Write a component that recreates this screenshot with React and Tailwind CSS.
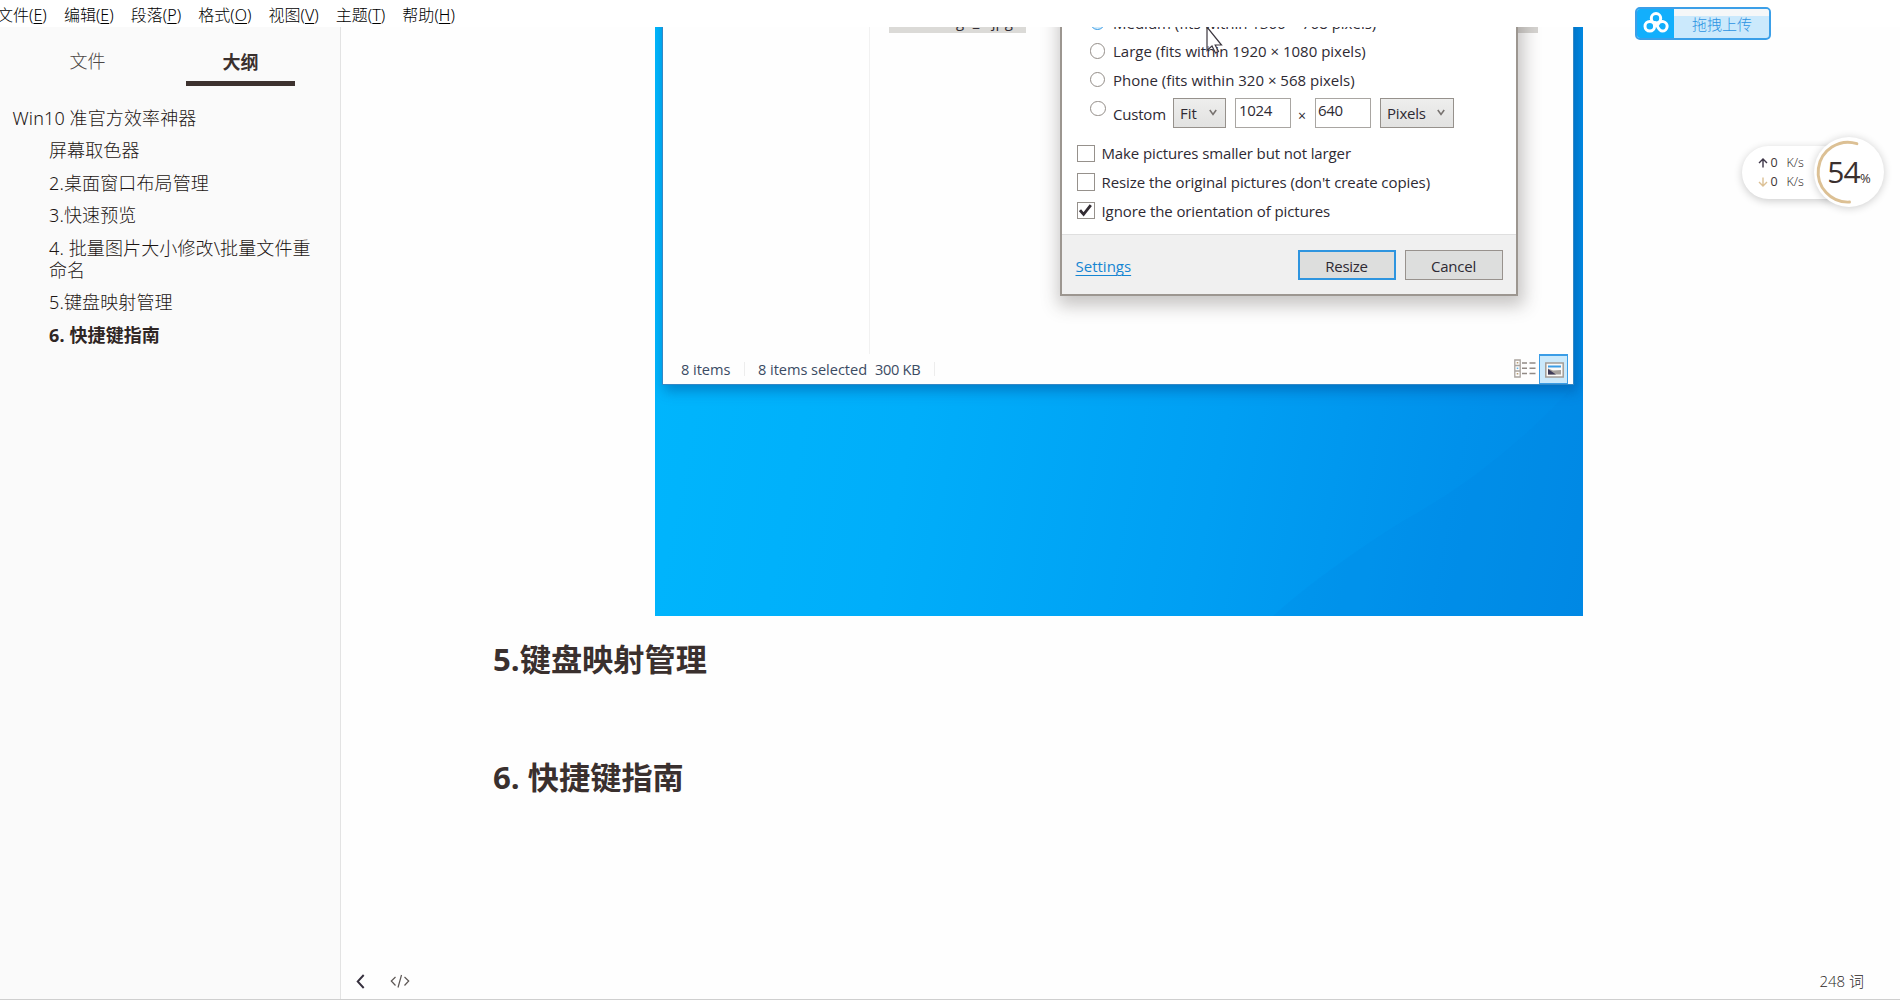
const MENU = [
  ["文件", "E"],
  ["编辑", "E"],
  ["段落", "P"],
  ["格式", "O"],
  ["视图", "V"],
  ["主题", "T"],
  ["帮助", "H"],
];

const OUTLINE = [
  "屏幕取色器",
  "2.桌面窗口布局管理",
  "3.快速预览",
  "4. 批量图片大小修改\\批量文件重命名",
  "5.键盘映射管理",
];

function MenuBar() {
  return (
    <header className='relative flex h-[27px] shrink-0 items-center gap-[17.1px] bg-white pt-[3px] font-["Noto_Sans","Noto_Sans_CJK_SC",sans-serif] text-[16px] leading-[22px] font-light text-black'>
      {MENU.map(([label, key], i) => (
        <span key={label} className={i === 0 ? "-ml-[3px] whitespace-nowrap" : "whitespace-nowrap"}>
          {label}(<span className="underline decoration-1 underline-offset-[2px]">{key}</span>)
        </span>
      ))}
    </header>
  );
}

function Sidebar() {
  return (
    <aside className='flex w-[341px] shrink-0 flex-col border-r border-[#e3e3e3] bg-[#fafafa] font-["Noto_Sans","Noto_Sans_CJK_SC",sans-serif] text-[18px] text-[#1c1513]'>
      <div className="flex h-[59px] gap-[31px] pl-[33px]">
        <div className="flex w-[109px] items-center justify-center pb-[1px] pt-[10px] font-light text-[#4c4746]">
          文件
        </div>
        <div className="-ml-px flex w-[109px] translate-x-[14px] flex-col items-center justify-end border-b-[5px] border-[#3d322f] pb-[7px] font-bold text-[#3a302e]">
          <span className="leading-[24px]">大纲</span>
        </div>
      </div>
      <nav className="flex flex-col gap-[10.5px] pt-[20.5px] font-light leading-[22px] tracking-[0.12px]">
        <div className="pl-[12.5px]">Win10 准官方效率神器</div>
        {OUTLINE.map((t) => (
          <div key={t} className="w-[318px] pl-[49px]">
            {t}
          </div>
        ))}
        <div className="pl-[49px] font-bold text-[#2f2624]">6. 快捷键指南</div>
      </nav>
    </aside>
  );
}

function Radio({ label, selected }) {
  return (
    <label className="flex h-[28.67px] items-center gap-[8px] pl-[27.5px]">
      <span
        className={
          selected
            ? "h-[15.5px] w-[15.5px] rounded-full border-[1.5px] border-[#3b9de6] bg-[#d4ecfb]"
            : "h-[15.5px] w-[15.5px] rounded-full border-[1.2px] border-[#938d88] bg-white"
        }
      />
      <span className="pt-[1px]">{label}</span>
    </label>
  );
}

function Check({ label, checked, tracking }) {
  return (
    <label className="flex h-[28.67px] items-center gap-[6.5px] pl-[14.5px]">
      <span className="flex h-[17.5px] w-[18.5px] items-center justify-center border-[1.5px] border-[#96918c] bg-white">
        {checked && (
          <svg width="13" height="13" viewBox="0 0 13 13" fill="none">
            <path d="M1 6.2 4.6 10.4 11.8 1.2" stroke="#332c33" strokeWidth="2.8" />
          </svg>
        )}
      </span>
      <span className={tracking}>{label}</span>
    </label>
  );
}

function Caret() {
  return (
    <svg width="8" height="7" viewBox="0 0 8 7" fill="none">
      <path d="M.8 1 4 5.4 7.2 1" stroke="#77726f" strokeWidth="1.6" />
    </svg>
  );
}

function ResizeDialog() {
  return (
    <div className="absolute -top-[19px] left-[405px] flex h-[288px] w-[458px] flex-col border-2 border-t-0 border-[#9c9690] bg-white text-[15px] leading-[20px] text-[#2e2a33] shadow-[2px_6px_16px_4px_rgba(60,55,50,0.28)]">
      <div className="flex flex-col">
        <Radio label="Medium (fits within 1366 × 768 pixels)" selected />
        <Radio label="Large (fits within 1920 × 1080 pixels)" />
        <Radio label="Phone (fits within 320 × 568 pixels)" />
      </div>
      <div className="flex h-[45px] pl-[28px] pt-[2px]">
        <span className="mt-[5px] h-[15.5px] w-[15.5px] rounded-full border-[1.2px] border-[#938d88] bg-white" />
        <span className="ml-[7.5px] mt-[8px] w-[60px] tracking-[-0.2px]">Custom</span>
        <span className="mt-[2px] flex h-[30px] w-[53px] items-center justify-between border border-[#96918c] bg-gradient-to-b from-[#eeeeed] to-[#e2e2e1] pl-[6px] pr-[8px]">
          Fit <Caret />
        </span>
        <span className="ml-[9px] mt-[2px] h-[30px] w-[56px] border border-[#a9a6a2] bg-white pl-[3px] pt-[1px] tracking-[-0.3px]">
          1024
        </span>
        <span className="ml-[7px] mt-[10px] w-[17px] text-[14px]">×</span>
        <span className="mt-[2px] h-[30px] w-[56px] border border-[#a9a6a2] bg-white pl-[2px] pt-[1px] tracking-[-0.3px]">
          640
        </span>
        <span className="ml-[9px] mt-[2px] flex h-[30px] w-[74px] items-center justify-between border border-[#96918c] bg-gradient-to-b from-[#eeeeed] to-[#e2e2e1] pl-[6px] pr-[8px] tracking-[-0.2px]">
          Pixels <Caret />
        </span>
      </div>
      <div className="flex flex-col">
        <Check label="Make pictures smaller but not larger" tracking="tracking-[-0.12px]" />
        <Check label="Resize the original pictures (don't create copies)" tracking="tracking-[-0.08px]" />
        <Check label="Ignore the orientation of pictures" checked tracking="tracking-[-0.09px]" />
      </div>
      <div className="mt-auto flex h-[60px] items-center border-t border-[#dfdfdf] bg-[#f0f0f0] pl-[13.5px] pr-[13.5px] pt-[1px]">
        <span className="mt-[2px] text-[#1585d2] underline decoration-1 underline-offset-[3px]">Settings</span>
        <div className="ml-auto flex gap-[9px]">
          <span className="flex h-[30px] w-[98px] items-center justify-center border-2 border-[#2f95df] bg-[#dddedd] pt-[2px] tracking-[-0.3px]">
            Resize
          </span>
          <span className="flex h-[30px] w-[98px] items-center justify-center border-[1.5px] border-[#98928d] bg-[#dddedd] pt-[2px] tracking-[-0.2px]">
            Cancel
          </span>
        </div>
      </div>
    </div>
  );
}

function ListIcon() {
  return (
    <svg width="22" height="19" viewBox="0 0 22 19" fill="none">
      <path d="M.8 1h5.4v17H.8zM.8 6.5h5.4M.8 12h5.4" stroke="#aaa49f" strokeWidth="1.3" />
      <path d="M8 4h5M15.500 4h6M8 9.300h5M15.500 9.300h6M8 14.500h5M15.500 14.500h6" stroke="#918a86" strokeWidth="1.4" />
      <path d="M2.700 3.700h1.600M2.700 14.700h1.600" stroke="#b59b73" strokeWidth="1.5" />
      <path d="M2.700 9.300h1.600" stroke="#65b5e8" strokeWidth="1.5" />
    </svg>
  );
}

function PictureIcon() {
  return (
    <svg width="19" height="16" viewBox="0 0 19 16" fill="none">
      <path d="M.8 1h17.400v14H.8z" fill="#fbfaf8" stroke="#a39c96" strokeWidth="1.5" />
      <path d="M3 3.500h13v2H3z" fill="#3b9de6" />
      <path d="M3 6.500 8 8.500 16 8v4.500H3z" fill="#a6a19d" />
      <path d="M3 7 11 12.500H3z" fill="#3e3b58" />
    </svg>
  );
}

function Cursor() {
  return (
    <svg className="absolute -top-[1px] left-[551px]" width="18" height="28" viewBox="0 0 18 28" fill="none">
      <path d="M1 1v23.500l5-4.500 3.500 7 3-1.500-3.300-6.500H15.500z" fill="#fff" fillOpacity=".5" stroke="#3c3740" strokeWidth="1.200" />
    </svg>
  );
}

function DesktopPicture() {
  return (
    <div className="relative ml-[314px] h-[589px] w-[928px] overflow-hidden bg-[linear-gradient(101deg,#00b7fd_0%,#00aefa_32%,#009ff3_62%,#0091eb_85%,#008ae5_100%)]">
      <svg className="absolute bottom-0 right-0" width="330" height="280" viewBox="0 0 330 280">
        <path d="M330 40V280H20Q70 235 150 185 250 130 330 40Z" fill="#0080dd" fillOpacity=".16" />
      </svg>
      <div className="absolute -top-[20px] left-[7px] flex h-[378px] w-[912px] flex-col border border-[#3388c6] bg-[#fefefe] shadow-[3px_5px_12px_1px_rgba(0,60,130,0.4)]">
        <div className="flex h-[346px]">
          <div className="w-[207px] border-r border-[#f1f1f1]" />
          <div className="ml-[19px] flex h-[24.5px] w-[137px] items-end justify-center overflow-hidden bg-[#dbdad7] pl-[28px] text-[15px] leading-[24px] text-[#2e2a33]">
            image_0.jpg
          </div>
          <div className="ml-auto mr-[35px] h-[24.5px] w-[22px] bg-[#d6d4d1]" />
        </div>
        <div className="flex flex-1 items-start text-[14.6px] leading-[20px] tracking-[-0.05px] text-[#3b4b63]">
          <span className="ml-[18px] mt-[5px] w-[63px]">8 items</span>
          <span className="mt-[8px] h-[14px] w-px bg-[#ededed]" />
          <span className="ml-[13px] mt-[5px] w-[117px] whitespace-nowrap">8 items selected</span>
          <span className="mt-[5px] w-[59px] whitespace-nowrap tracking-[-0.3px]">300 KB</span>
          <span className="mt-[8px] h-[14px] w-px bg-[#ededed]" />
          <span className="ml-auto mt-[5px]">
            <ListIcon />
          </span>
          <span className="ml-[3px] mr-[5px] flex h-[30px] w-[29px] items-center justify-center border border-t-2 border-[#3b9de6] bg-[#cbe9fb] pl-[2px]">
            <PictureIcon />
          </span>
        </div>
      </div>
      <ResizeDialog />
      <Cursor />
    </div>
  );
}

function UploadButton() {
  return (
    <div className="absolute left-[1635px] top-[7px] flex h-[33px] w-[136px] overflow-hidden rounded-[5px] border-2 border-[#3b9fe8] bg-[#cbe9fc]">
      <div className="-my-[2px] -ml-[2px] flex w-[39px] items-center justify-center bg-[#12affc] pb-[2px] pl-[2px]">
        <svg width="26" height="21" viewBox="0 0 26 21" fill="none" stroke="#fff" strokeWidth="3" strokeLinecap="round">
          <circle cx="13" cy="6.300" r="4.700" />
          <circle cx="6.800" cy="14.300" r="4.800" />
          <path d="M12 10.500c2 2 3.500 8.600 7.300 8.600a4.800 4.800 0 1 0-4.500-6.400" />
        </svg>
      </div>
      <div className="flex flex-1 items-center justify-center bg-[linear-gradient(#f5f7f8_0,#f5f7f8_7px,transparent_7px)] pl-[1px] pt-[1px] text-[15px] leading-[20px] font-light text-[#2b93e2]">
        拖拽上传
      </div>
    </div>
  );
}

function SpeedRow({ up }) {
  return (
    <div className="flex h-[19px] items-center text-[12.5px]">
      <svg width="10" height="10" viewBox="0 0 10 10" fill="none" stroke={up ? "#3d3547" : "#dcc094"} strokeWidth="1.400">
        {up ? <path d="M5 9.500V1M1 5 5 1l4 4" /> : <path d="M5 .5V9M1 5l4 4 4-4" />}
      </svg>
      <span className="ml-[2.500px] w-[16px] text-[#3c3535]">0</span>
      <span className="font-light text-[#2c2525]">K/s</span>
    </div>
  );
}

function SpeedWidget() {
  return (
    <div className="absolute left-[1742px] top-[137px] flex items-center">
      <div className="flex h-[53px] w-[90px] flex-col justify-center rounded-l-full bg-white pl-[16px] pt-[1px] shadow-[0_2px_9px_rgba(0,0,0,0.2)]">
        <SpeedRow up />
        <SpeedRow />
      </div>
      <div className="relative -ml-[18px] flex h-[70px] w-[70px] items-center justify-center rounded-full bg-white shadow-[0_1px_9px_rgba(0,0,0,0.2)]">
        <svg className="absolute inset-0" width="70" height="70" viewBox="0 0 71 71" fill="none">
          <path d="M43.500 6.800A30.300 30.300 0 1 0 36 66" stroke="#dcc094" strokeWidth="3" strokeLinecap="round" />
        </svg>
        <div className="relative flex items-baseline pb-[1px] text-[#3a302e]">
          <span className="text-[30px] leading-[40px] tracking-[-0.8px]">54</span>
          <span className="text-[13px]">%</span>
        </div>
      </div>
    </div>
  );
}

function StatusBar() {
  return (
    <footer className="mt-auto flex h-[36px] items-center justify-between pl-[15px] pr-[36px] font-light">
      <div className="flex items-center gap-[25px]">
        <svg width="9" height="15" viewBox="0 0 9 15" fill="none" stroke="#352f3d" strokeWidth="1.900">
          <path d="M7.700 1 1.700 7.500l6 6.500" />
        </svg>
        <svg width="20" height="14" viewBox="0 0 20 14" fill="none" stroke="#5c5654" strokeWidth="1.200">
          <path d="M5.500 3 1.300 7l4.200 4.500M14.500 3l4.200 4-4.200 4.500M11.500 1 8 13.500" />
        </svg>
      </div>
      <span className="text-[15px] text-[#2b2626]">248 词</span>
    </footer>
  );
}

export default function App() {
  return (
    <div className='relative flex h-[1000px] w-[1900px] flex-col overflow-hidden border-b border-[#cfcfcf] bg-[#fefefe] font-["Open_Sans","Noto_Sans_CJK_SC",sans-serif]'>
      <MenuBar />
      <div className="flex min-h-0 flex-1">
        <Sidebar />
        <main className="flex flex-1 flex-col">
          <DesktopPicture />
          <div className="flex flex-col gap-[72px] pl-[152px] pt-[20px] text-[31.2px] leading-[46px] font-bold text-[#3a302e]">
            <h2>5.键盘映射管理</h2>
            <h2>6. 快捷键指南</h2>
          </div>
          <StatusBar />
        </main>
      </div>
      <UploadButton />
      <SpeedWidget />
    </div>
  );
}
